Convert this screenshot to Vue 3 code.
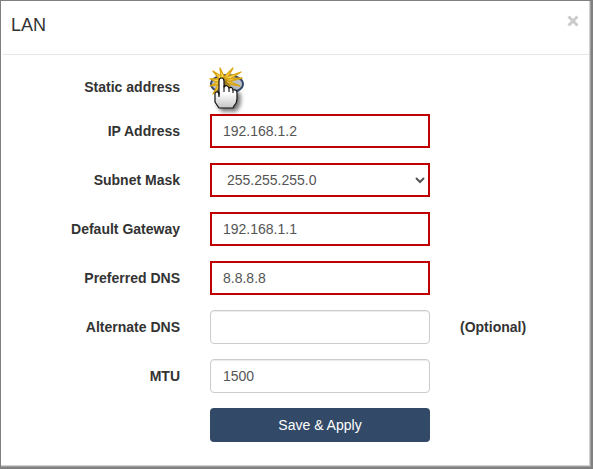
<template>
  <form class="modal" @submit.prevent>
    <header class="modal-header">
      <h4 class="modal-title">LAN</h4>
      <button type="button" class="close" aria-label="Close">
        <svg width="12" height="12" viewBox="0 0 12 12" fill="none" stroke="currentColor" stroke-width="3">
          <path d="M1.5 1.5l9 9M10.5 1.5l-9 9"></path>
        </svg>
      </button>
    </header>

    <div class="modal-body">
      <div class="row row-static">
        <label for="static">Static address</label>
        <div class="field">
          <div class="toggle">
            <input id="static" type="checkbox" v-model="isStatic">
            <svg class="pointer" width="42" height="54" viewBox="0 0 42 54">
              <defs>
                <linearGradient id="hand" x1="0" y1="0" x2="0" y2="1">
                  <stop offset="0.5" stop-color="#fff"></stop>
                  <stop offset="1" stop-color="#c4c4c4"></stop>
                </linearGradient>
                <filter id="shade" x="-30%" y="-30%" width="180%" height="180%">
                  <feDropShadow dx="3" dy="3" stdDeviation="2" flood-opacity="0.55"></feDropShadow>
                </filter>
              </defs>
              <ellipse cx="21" cy="19" rx="16" ry="9" fill="#b9c0ca" stroke="#34496a" stroke-width="2"></ellipse>
              <g fill="#ffdc5c" stroke="#dba510" stroke-width="1.3" stroke-linejoin="round">
                <path d="M14 15L7 6L18 13Z"></path>
                <path d="M15 13L14 3L19 13Z"></path>
                <path d="M17 13L27 3L21 14Z"></path>
                <path d="M18 13L35 7L21 16Z"></path>
                <path d="M20 14L36 13L21 17Z"></path>
                <path d="M20 15L34 21L19 18Z"></path>
                <path d="M19 16L29 27L17 19Z"></path>
                <path d="M15 14L4 14L13 18Z"></path>
                <path d="M15 15L4 21L15 19Z"></path>
                <path d="M14 16L7 29L17 19Z"></path>
                <path d="M15 17L13 29L19 18Z"></path>
              </g>
              <path
                d="M13 30V16Q13 13 15.5 13T18 16V22Q21 19 23 23Q26 21 27 25Q31 24 31 28V34Q31 38 28 41L27 43H13L9 37V29Q9 27 11 27T13 30Z"
                fill="url(#hand)" stroke="#111" stroke-width="1.2" stroke-linejoin="round" filter="url(#shade)"
              ></path>
              <path d="M13 27V32M18 21V27M23 23V27M27 25V28" fill="none" stroke="#111" stroke-width="1.1"></path>
            </svg>
          </div>
        </div>
      </div>

      <div class="row" v-for="item in fields" :key="item.id">
        <label :for="item.id">{{ item.label }}</label>
        <div class="field">
          <select v-if="item.options" :id="item.id" v-model="item.value" class="form-control" :class="{ required: item.required }">
            <option v-for="option in item.options" :key="option">{{ option }}</option>
          </select>
          <input v-else :id="item.id" v-model="item.value" type="text" class="form-control" :class="{ required: item.required }">
        </div>
        <span v-if="item.note" class="note">{{ item.note }}</span>
      </div>

      <div class="row">
        <div class="field field-action">
          <button type="submit" class="btn">Save &amp; Apply</button>
        </div>
      </div>
    </div>
  </form>
</template>

<script setup>
import { ref } from 'vue'

const isStatic = ref(true)
const fields = ref([
  { id: 'ip', label: 'IP Address', value: '192.168.1.2', required: true },
  { id: 'mask', label: 'Subnet Mask', value: '255.255.255.0', required: true, options: ['255.255.255.0', '255.255.0.0', '255.0.0.0'] },
  { id: 'gateway', label: 'Default Gateway', value: '192.168.1.1', required: true },
  { id: 'dns1', label: 'Preferred DNS', value: '8.8.8.8', required: true },
  { id: 'dns2', label: 'Alternate DNS', value: '', note: '(Optional)' },
  { id: 'mtu', label: 'MTU', value: '1500' }
])
</script>

<style>
body {
  margin: 0;
  background: #fff;
}
</style>

<style scoped>
.modal,
.modal * {
  box-sizing: border-box;
}
.modal {
  border: 1px solid #808080;
  border-right-width: 2px;
  border-bottom-width: 2px;
  background: #fff;
  box-shadow: inset -1px -1px #a0a0a0, inset -2px -2px #d0d0d0;
  color: #333;
  font-family: "Liberation Sans", Arial, sans-serif;
  font-size: 14px;
  line-height: 20px;
}
.modal-header {
  display: flex;
  justify-content: space-between;
  align-items: flex-start;
  margin: 0 2px;
  padding: 12px 10px 16px 8px;
  border-bottom: 1px solid #e5e5e5;
}
.modal-title {
  margin: 0;
  font-size: 18px;
  font-weight: 400;
  line-height: 25px;
}
.close {
  display: flex;
  padding: 2px 0;
  border: 0;
  background: none;
  color: #ccc;
  cursor: pointer;
}
.modal-body {
  padding: 15px 0 25px;
}
.row {
  display: grid;
  grid-template-columns: 194fr 250fr 146fr;
  align-items: center;
  min-height: 34px;
  margin-bottom: 15px;
}
.row:last-child {
  margin-bottom: 0;
}
.row-static {
  margin-bottom: 10px;
}
label {
  padding-right: 15px;
  font-weight: 700;
  text-align: right;
}
.field {
  padding: 0 15px;
}
.field-action {
  grid-column: 2;
}
.note {
  padding-left: 15px;
  font-weight: 700;
}
.form-control {
  display: block;
  width: 100%;
  height: 34px;
  padding: 6px 12px;
  border: 1px solid #ccc;
  border-radius: 4px;
  background: #fff;
  box-shadow: inset 0 1px 1px rgba(0, 0, 0, 0.08);
  color: #555;
  font: inherit;
}
.form-control.required {
  padding: 5px 11px;
  border: 2px solid #c00000;
  border-radius: 0;
  box-shadow: none;
}
.toggle {
  position: relative;
  width: 32px;
  height: 20px;
}
.toggle input {
  width: 100%;
  height: 100%;
  margin: 0;
  opacity: 0;
}
.pointer {
  position: absolute;
  top: -12px;
  left: -4px;
  pointer-events: none;
}
.btn {
  display: block;
  width: 100%;
  height: 34px;
  border: 0;
  border-radius: 4px;
  background: #334968;
  color: #fff;
  font: inherit;
  cursor: pointer;
}
</style>
